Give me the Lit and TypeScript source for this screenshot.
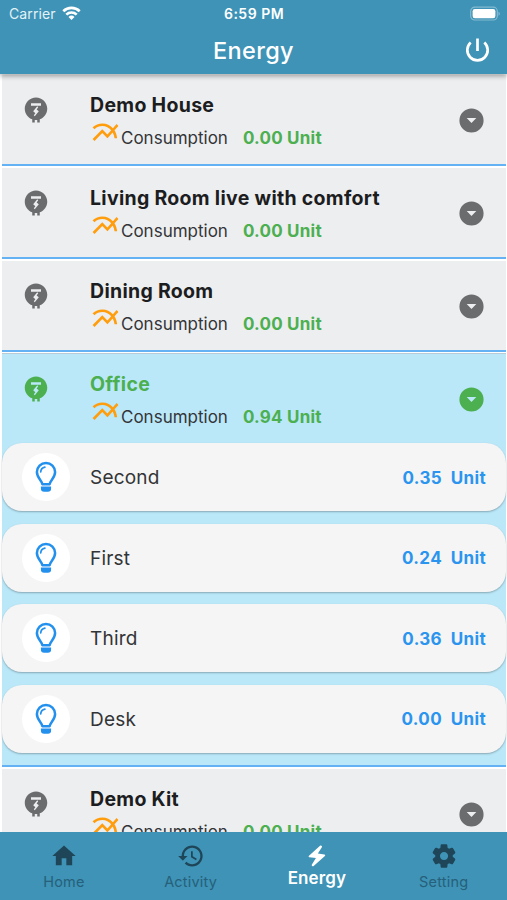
import { LitElement, html, css, svg } from "lit";
import { customElement, property } from "lit/decorators.js";

const ICONS = {
  home: svg`<path d="M10 20v-6h4v6h5v-8h3L12 3 2 12h3v8z"/>`,
  history: svg`<path d="M13 3c-4.97 0-9 4.03-9 9H1l3.89 3.89.07.14L9 12H6c0-3.87 3.13-7 7-7s7 3.13 7 7-3.13 7-7 7c-1.93 0-3.68-.79-4.94-2.06l-1.42 1.42C8.27 19.99 10.51 21 13 21c4.97 0 9-4.03 9-9s-4.03-9-9-9zm-1 5v5l4.28 2.54.72-1.21-3.5-2.08V8H12z"/>`,
  energy: svg`<path d="M14.8 2.6 4.6 11.8c-.6.6-.3 1.3.3 1.4l6.1.7-3.7 5.9c-.3.5-.1 1.1.2 1.4.4.4 1 .4 1.4 0l10.4-9.3c.6-.6.2-1.3-.4-1.4l-6.1-.7 3.7-5.9c.6-1-.9-2.1-1.7-1.3z"/>`,
  settings: svg`<path d="M19.5 12c0-.23-.01-.45-.03-.68l1.86-1.41c.4-.3.51-.86.26-1.3l-1.87-3.23a.987.987 0 0 0-1.25-.42l-2.15.91c-.37-.26-.76-.49-1.17-.68l-.29-2.31c-.06-.5-.49-.88-.99-.88h-3.73c-.51 0-.94.38-1 .88l-.29 2.31c-.41.19-.8.42-1.17.68l-2.15-.91c-.46-.2-1-.02-1.25.42L2.41 8.62c-.25.44-.14.99.26 1.3l1.86 1.41a7.343 7.343 0 0 0 0 1.35l-1.86 1.41c-.4.3-.51.86-.26 1.3l1.87 3.23c.25.44.79.62 1.25.42l2.15-.91c.37.26.76.49 1.17.68l.29 2.31c.06.5.49.88.99.88h3.73c.5 0 .93-.38.99-.88l.29-2.31c.41-.19.8-.42 1.17-.68l2.15.91c.46.2 1 .02 1.25-.42l1.87-3.23c.25-.44.14-.99-.26-1.3l-1.86-1.41c.03-.23.04-.45.04-.68zm-7.46 3.5c-1.93 0-3.5-1.57-3.5-3.5s1.57-3.5 3.5-3.5 3.5 1.57 3.5 3.5-1.57 3.5-3.5 3.5z"/>`,
  meter: svg`<path fill-rule="evenodd" d="M12 2c-4.96 0-9 4.04-9 9 0 3.91 2.51 7.24 6 8.48V22h2v-2.06c.33.04.66.06 1 .06s.67-.02 1-.06V22h2v-2.52c3.49-1.24 6-4.57 6-8.48 0-4.96-4.04-9-9-9zm2.25 11L11 17l-.75-.75 1.25-1.75L9.75 13 13 9l.75.75-1.25 1.75L14.25 13zM16 8.5H8v-2h8v2z"/>`,
  chart: svg`<path d="m22 6.92-1.41-1.41-2.85 3.21C15.68 6.4 12.83 5 9.61 5 6.72 5 4.07 6.16 2 8l1.42 1.42C5.12 7.93 7.27 7 9.61 7c2.74 0 5.09 1.26 6.77 3.24l-2.88 3.24-4-4L2 16.99l1.5 1.5 6-6.01 4 4 4.05-4.55c.75 1.35 1.25 2.9 1.44 4.55H21c-.22-2.3-.95-4.39-2.04-6.14L22 6.92z"/>`,
  drop: svg`<path fill-rule="evenodd" d="M12 2a10 10 0 1 0 0 20 10 10 0 0 0 0-20zm0 12-4-4h8z"/>`,
};

type Room = { name: string; value: string; devices?: [string, string][] };

const ROOMS: Room[] = [
  { name: "Demo House", value: "0.00" },
  { name: "Living Room live with comfort", value: "0.00" },
  { name: "Dining Room", value: "0.00" },
  {
    name: "Office",
    value: "0.94",
    devices: [["Second", "0.35"], ["First", "0.24"], ["Third", "0.36"], ["Desk", "0.00"]],
  },
  { name: "Demo Kit", value: "0.00" },
];

@customElement("device-card")
class DeviceCard extends LitElement {
  @property() name = "";
  @property() value = "";
  static styles = css`
    :host { display: flex; align-items: center; box-sizing: border-box; height: 68px; padding: 0 20px;
      background: #f5f5f5; border-radius: 20px; box-shadow: 0 1px 2px rgba(0,0,0,.28); }
    .bulb { width: 48px; height: 48px; border-radius: 50%; background: #fff; display: flex; align-items: center; justify-content: center; }
    svg { width: 24px; height: 32px; display: block; }
    .name { flex: 1; margin-left: 20px; padding-top: 1px; font-size: 19px; letter-spacing: .2px; color: #333436; }
    .value { padding-top: 1px; font-size: 17px; font-weight: 700; letter-spacing: .35px; color: #2a94ef; white-space: pre; }
  `;
  render() {
    return html`
      <div class="bulb">
        <svg viewBox="0 0 24 32" fill="none" stroke="#2390ee" stroke-width="2.5">
          <path d="M8.3 23.2C7.900 19.500 2.900 16.900 2.900 11a9.100 9.100 0 0 1 18.200 0C21.100 16.900 16.100 19.500 15.700 23.200Z" stroke-linejoin="round"/>
          <path d="M6.700 10.900c.2-2.500 1.700-4.200 4.200-4.700" stroke-width="1.700" stroke-linecap="round"/>
          <path d="M6.900 25.600h10.200v1.800a3.300 3.300 0 0 1-3.300 3.300h-3.600a3.300 3.300 0 0 1-3.300-3.300z" fill="#2390ee" stroke="none"/>
        </svg>
      </div>
      <span class="name">${this.name}</span>
      <span class="value">${this.value}  Unit</span>`;
  }
}

@customElement("room-tile")
class RoomTile extends LitElement {
  @property({ attribute: false }) room!: Room;
  static styles = css`
    :host { display: block; flex: none; margin: 0 1px 0 2px; }
    .tile { background: #edeef0; border-bottom: 2px solid #64b1f4; margin-bottom: 2px; }
    .tile.open { background: #bae8f9; box-shadow: 0 -1px 0 #b9cbd6; }
    .head { height: 89px; display: flex; align-items: flex-start; color: #6b6c6e; }
    svg { fill: currentColor; display: block; flex: none; }
    .meter { width: 30px; height: 30px; margin: 20px 0 0 19px; }
    .info { flex: 1; margin-left: 39px; padding-top: 17px; }
    .name { font-size: 19.5px; line-height: 26px; font-weight: 700; letter-spacing: .3px; color: #1c1d20; white-space: nowrap; }
    .usage { display: flex; height: 32px; line-height: 32px; margin-top: 4px; font-size: 17px; letter-spacing: 0; color: #343538; }
    .chart { width: 31px; height: 31px; margin: -5px 0 0 0; color: #ff9d0d; }
    .amount { margin-left: 15px; color: #4caf50; font-weight: 700; letter-spacing: .22px; }
    .drop { width: 29px; height: 29px; margin: 31px 20px 0 0; }
    .open .meter, .open .drop, .open .name { color: #4caf50; }
    .devices { display: flex; flex-direction: column; gap: 12.6px; padding-bottom: 12px; }
  `;
  render() {
    const r = this.room;
    return html`
      <div class="tile ${r.devices ? "open" : ""}">
        <div class="head">
          <svg class="meter" viewBox="0 0 24 24">${ICONS.meter}</svg>
          <div class="info">
            <div class="name">${r.name}</div>
            <div class="usage">
              <svg class="chart" viewBox="0 0 24 24">${ICONS.chart}</svg>
              <span>Consumption</span><span class="amount">${r.value} Unit</span>
            </div>
          </div>
          <svg class="drop" viewBox="0 0 24 24">${ICONS.drop}</svg>
        </div>
        ${r.devices
          ? html`<div class="devices">
              ${r.devices.map(([n, v]) => html`<device-card .name=${n} .value=${v}></device-card>`)}
            </div>`
          : ""}
      </div>`;
  }
}

@customElement("app-root")
class AppRoot extends LitElement {
  static styles = css`
    :host { display: flex; flex-direction: column; width: 507px; height: 900px; overflow: hidden; background: #fff; font-family: Inter, "Liberation Sans", sans-serif; }
    header { flex: none; height: 74px; background: #3e93b6; color: #fff; position: relative; z-index: 1; box-shadow: 0 2px 5px rgba(0,0,0,.36); }
    .status { display: grid; grid-template-columns: 1fr auto 1fr; align-items: center; height: 27px; padding: 0 6px 0 9px; font-size: 14px; }
    .carrier { display: flex; align-items: center; gap: 6px; letter-spacing: .1px; color: #e3f2f7; }
    .time { font-weight: 600; font-size: 14px; letter-spacing: .5px; margin-right: 2px; }
    .wifi { width: 19px; height: 14px; margin-top: -2px; }
    .battery { width: 31px; height: 16px; justify-self: end; }
    .title { display: grid; grid-template-columns: 1fr auto 1fr; align-items: center; height: 46px; padding: 0 15px; font-size: 23.5px; font-weight: 500; letter-spacing: .35px; }
    .power { width: 29px; height: 29px; justify-self: end; }
    main { flex: 1; min-height: 0; overflow: hidden; display: flex; flex-direction: column; padding-top: 1px; }
    nav { flex: none; height: 68.5px; background: #3e93b6; display: grid; grid-template-columns: repeat(4, 1fr); }
    .tab { display: flex; flex-direction: column; align-items: center; padding-top: 10px; font-size: 14.5px; letter-spacing: .2px; line-height: 18px; }
    .tab svg { width: 28px; height: 28px; fill: #1f4658; }
    .tab span { margin-top: 3px; color: #26607a; }
    .tab.active svg { fill: #fff; width: 26px; height: 26px; margin-top: 1px; }
    .tab.active span { color: #fff; font-size: 17px; font-weight: 600; line-height: 20px; margin-top: -1px; letter-spacing: .1px; }
    .tab:first-child { padding-left: 1px; }
    .tab:nth-child(2) { padding-left: 1px; }
  `;
  tab(icon: unknown, label: string, active = false) {
    return html`<div class="tab ${active ? "active" : ""}"><svg viewBox="0 0 24 24">${icon}</svg><span>${label}</span></div>`;
  }
  render() {
    return html`
      <header>
        <div class="status">
          <div class="carrier">Carrier
            <svg class="wifi" viewBox="0 0 19 14" fill="none" stroke="#fff" stroke-width="2.7">
              <path d="M1.3 5.2a11.8 11.8 0 0 1 16.4 0M4.3 8.6a7.5 7.5 0 0 1 10.4 0"/>
              <path d="M6.5 11a4.4 4.4 0 0 1 6 0l-3 3z" fill="#fff" stroke="none"/>
            </svg>
          </div>
          <div class="time">6:59 PM</div>
          <svg class="battery" viewBox="0 0 31 16">
            <rect x=".7" y="1.2" width="26.6" height="12.8" rx="4" fill="none" stroke="#84bbd1" stroke-width="1.2"/>
            <rect x="2.6" y="3" width="22.8" height="9.2" rx="2.2" fill="#fff"/>
            <path d="M28.5 5.8v4c1.8-.7 1.8-3.3 0-4z" fill="#84bbd1"/>
          </svg>
        </div>
        <div class="title"><span></span><span>Energy</span>
          <svg class="power" viewBox="0 0 29 29" fill="none" stroke="#fff" stroke-width="2.7">
            <path d="M14.5 2.500v12.500M7.700 6.600a10.200 10.200 0 1 0 13.600 0"/>
          </svg>
        </div>
      </header>
      <main>${ROOMS.map((r) => html`<room-tile .room=${r}></room-tile>`)}</main>
      <nav>
        ${this.tab(ICONS.home, "Home")}${this.tab(ICONS.history, "Activity")}
        ${this.tab(ICONS.energy, "Energy", true)}${this.tab(ICONS.settings, "Setting")}
      </nav>`;
  }
}
